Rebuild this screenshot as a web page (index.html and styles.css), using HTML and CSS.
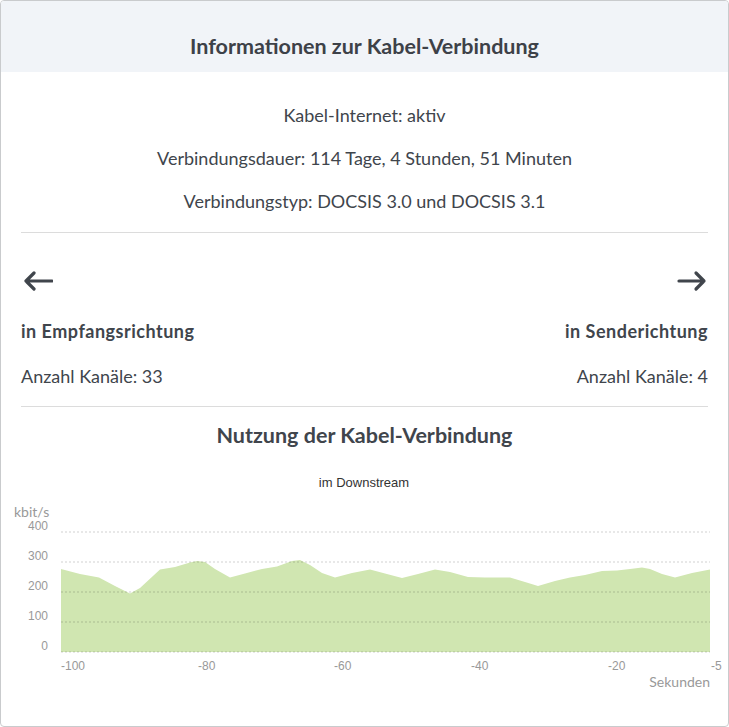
FILE: index.html
```html
<!DOCTYPE html>
<html lang="de">

<head>
    <meta charset="UTF-8">
    <meta name="viewport" content="width=device-width, initial-scale=1.0">
    <title>Kabel-Verbindung</title>
    <link rel="stylesheet" href="styles.css">
</head>

<body>
    <div class="card">
        <div class="card-header">
            <h2>Informationen zur Kabel-Verbindung</h2>
        </div>
        <div class="card-body">
            <div class="status">
                <p>Kabel-Internet: aktiv</p>
                <p>Verbindungsdauer: 114 Tage, 4 Stunden, 51 Minuten</p>
                <p>Verbindungstyp: DOCSIS 3.0 und DOCSIS 3.1</p>
            </div>
            <div class="directions">
                <div class="direction">
                    <svg class="arrow" width="32" height="24" viewBox="0 0 32 24">
                        <path d="M5 12 H31 M5 12 L13 4 M5 12 L13 20" />
                    </svg>
                    <h4>in Empfangsrichtung</h4>
                    <p>Anzahl Kanäle: 33</p>
                </div>
                <div class="direction right">
                    <svg class="arrow" width="32" height="24" viewBox="0 0 32 24">
                        <path d="M3 12 H28 M28 12 L20 4 M28 12 L20 20" />
                    </svg>
                    <h4>in Senderichtung</h4>
                    <p>Anzahl Kanäle: 4</p>
                </div>
            </div>
            <h3 class="usage-title">Nutzung der Kabel-Verbindung</h3>
            <svg class="chart" width="727" height="260" viewBox="1 449 727 260">
                <text class="subtitle" x="364" y="486" text-anchor="middle">im Downstream</text>
                <path class="area" d="M61 568 L80 573 L99 576.5 L115 585 L130 592.5 L140 587 L160 568.5 L175 566 L190 561.5 L197 560 L205 561 L215 568 L230 576.5 L245 572.5 L262 568 L277 565.5 L292 560 L300 559 L310 564 L322 572 L335 576.5 L352 572 L370 568.5 L385 572.5 L402 577 L418 573 L435 568.5 L450 571 L468 576 L485 576.5 L510 576.5 L525 581 L538 585 L555 580 L570 576.5 L585 574 L602 570 L617 569.5 L630 568 L642 566.5 L650 568 L662 573 L675 576.5 L692 572 L710 568.5 L710 651 L61 651 Z" />
                <g class="grid">
                    <line x1="61" y1="531" x2="710" y2="531" />
                    <line x1="61" y1="561" x2="710" y2="561" />
                    <line x1="61" y1="591" x2="710" y2="591" />
                    <line x1="61" y1="621" x2="710" y2="621" />
                    <line x1="61" y1="651" x2="710" y2="651" />
                </g>
                <g class="axis-labels">
                    <text class="unit" x="14" y="516">kbit/s</text>
                    <text x="48" y="529" text-anchor="end">400</text>
                    <text x="48" y="558.5" text-anchor="end">300</text>
                    <text x="48" y="588.5" text-anchor="end">200</text>
                    <text x="48" y="618.5" text-anchor="end">100</text>
                    <text x="48" y="648.5" text-anchor="end">0</text>
                    <text x="61" y="668.5">-100</text>
                    <text x="198" y="668.5">-80</text>
                    <text x="334" y="668.5">-60</text>
                    <text x="471" y="668.5">-40</text>
                    <text x="608" y="668.5">-20</text>
                    <text x="711" y="668.5">-5</text>
                    <text class="unit" x="710" y="686" text-anchor="end">Sekunden</text>
                </g>
            </svg>
        </div>
    </div>
</body>

</html>
```

FILE: styles.css
```css
body {
    margin: 0;
    font-family: "Source Sans Pro", Lato, sans-serif;
    color: #40454c;
}

.card {
    width: 727px;
    height: 725px;
    border: 1px solid #c9cbcd;
    border-radius: 4px;
    overflow: hidden;
}

.card-header {
    background-color: #f1f4f8;
    height: 71px;
    box-sizing: border-box;
    padding-top: 31px;
    text-align: center;
}

.card-header h2 {
    margin: 0;
    font-size: 21.5px;
    font-weight: 700;
    line-height: 28px;
    color: #3d4148;
}

.card-body {
    padding: 0 20px;
}

.status {
    padding: 22px 0 9px;
    border-bottom: 1px solid #dcdcdc;
    text-align: center;
}

.status p {
    margin: 0;
    font-size: 18px;
    line-height: 43px;
}

.directions {
    display: flex;
    justify-content: space-between;
    padding: 36px 0 18px;
    border-bottom: 1px solid #dcdcdc;
}

.direction {
    display: flex;
    flex-direction: column;
    align-items: flex-start;
}

.direction.right {
    align-items: flex-end;
}

.arrow {
    display: block;
    margin-bottom: 26px;
}

.arrow path {
    fill: none;
    stroke: #40454c;
    stroke-width: 3.2;
    stroke-linecap: round;
    stroke-linejoin: round;
}

.direction h4 {
    margin: 0 0 21px;
    font-size: 18px;
    font-weight: 700;
    letter-spacing: 0.5px;
    line-height: 24px;
}

.direction p {
    margin: 0;
    font-size: 18px;
    line-height: 24px;
}

.usage-title {
    margin: 0;
    padding-top: 13px;
    font-size: 21.5px;
    font-weight: 700;
    line-height: 30px;
    text-align: center;
}

.chart {
    display: block;
    margin: 0 -20px;
}

.chart .subtitle {
    font-family: "Liberation Sans", Arial, sans-serif;
    font-size: 13px;
    fill: #333333;
}

.chart .area {
    fill: #d0e6b1;
}

.chart .grid line {
    stroke: rgba(0, 0, 0, 0.18);
    stroke-width: 1;
    stroke-dasharray: 2 2;
}

.axis-labels text {
    font-family: "Liberation Sans", Arial, sans-serif;
    font-size: 12px;
    fill: #999999;
}

.axis-labels .unit {
    font-family: "Source Sans Pro", Lato, sans-serif;
    font-size: 14px;
}
```
